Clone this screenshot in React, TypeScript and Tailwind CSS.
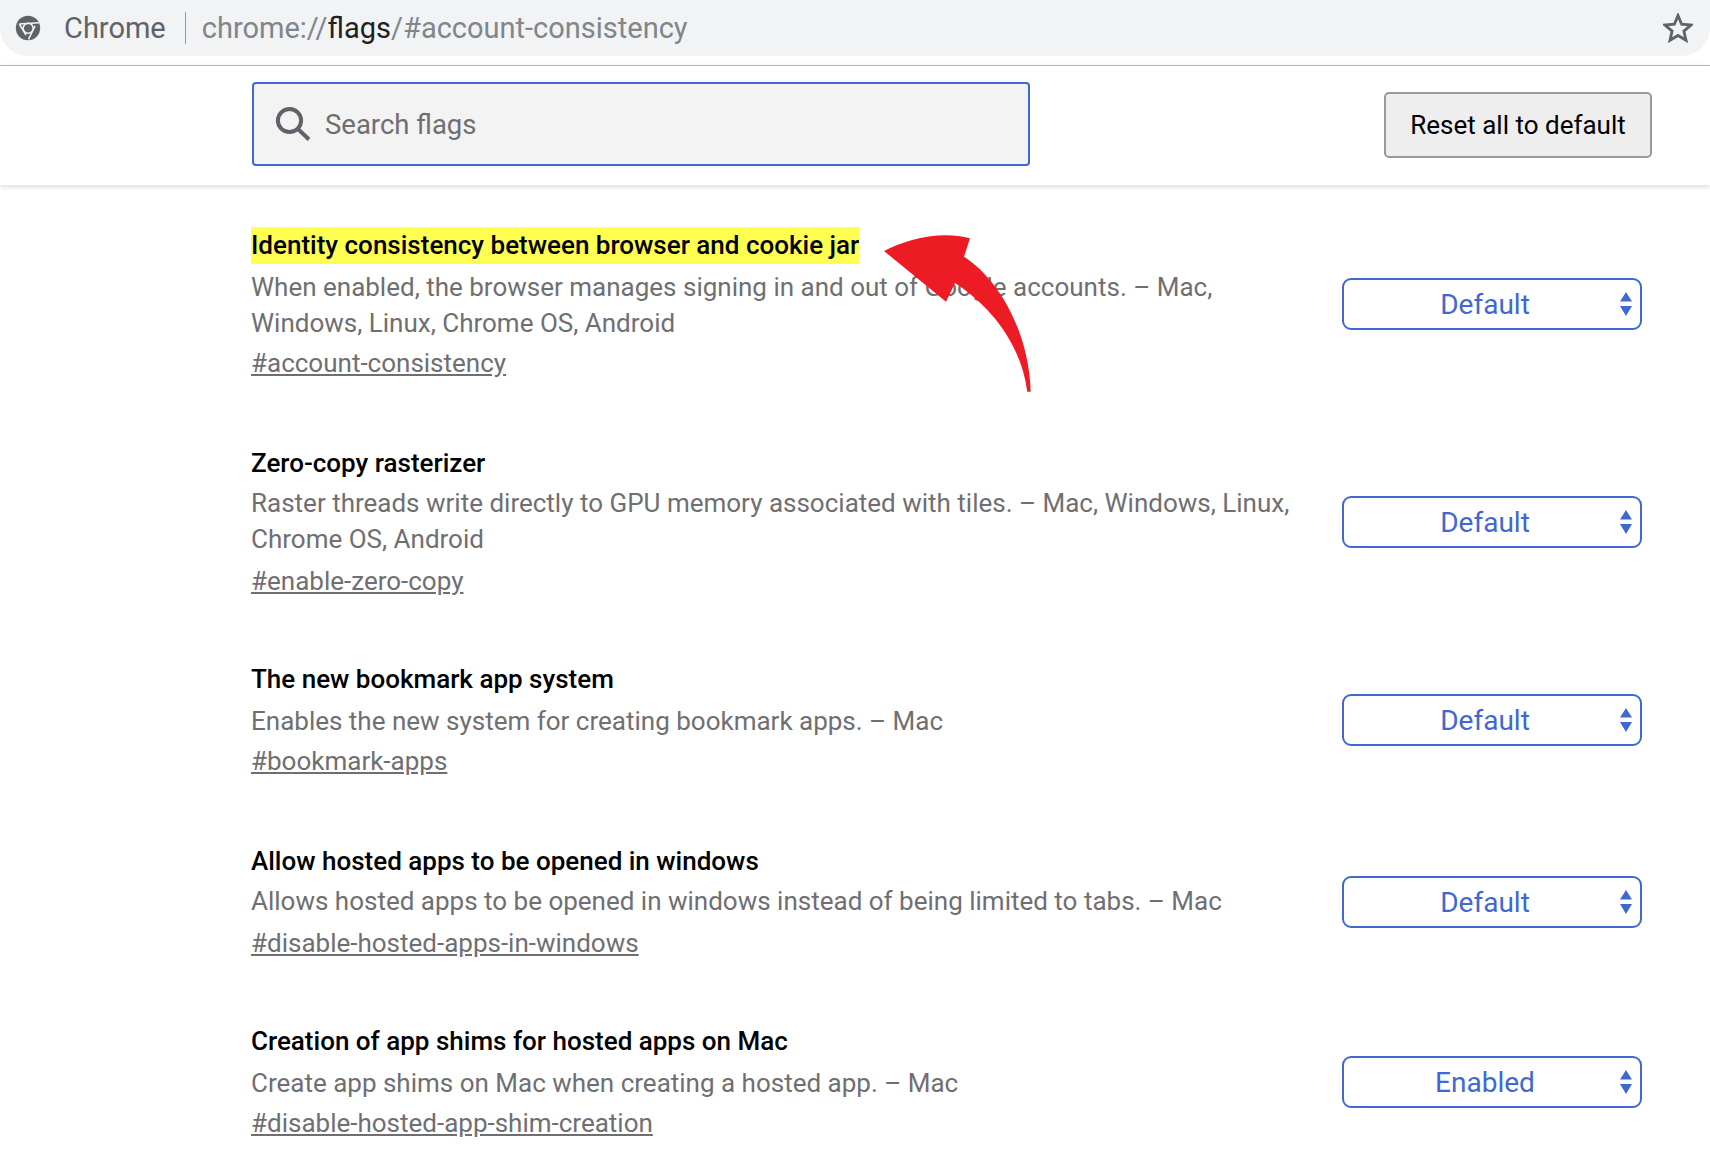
const rows = [
  { title: "Identity consistency between browser and cookie jar", highlight: true, desc: ["When enabled, the browser manages signing in and out of Google accounts. – Mac,", "Windows, Linux, Chrome OS, Android"], link: "#account-consistency", value: "Default", top: "mt-[42px]", dm: "mt-[6px]", lm: "mt-[4px]", sm: "mt-[51px]" },
  { title: "Zero-copy rasterizer", desc: ["Raster threads write directly to GPU memory associated with tiles. – Mac, Windows, Linux,", "Chrome OS, Android"], link: "#enable-zero-copy", value: "Default", top: "mt-[64px]", dm: "mt-[4px]", lm: "mt-[6px]", sm: "mt-[51px]" },
  { title: "The new bookmark app system", desc: ["Enables the new system for creating bookmark apps. – Mac"], link: "#bookmark-apps", value: "Default", top: "mt-[62px]", dm: "mt-[6px]", lm: "mt-[4px]", sm: "mt-[33px]" },
  { title: "Allow hosted apps to be opened in windows", desc: ["Allows hosted apps to be opened in windows instead of being limited to tabs. – Mac"], link: "#disable-hosted-apps-in-windows", value: "Default", top: "mt-[64px]", dm: "mt-[4px]", lm: "mt-[6px]", sm: "mt-[33px]" },
  { title: "Creation of app shims for hosted apps on Mac", desc: ["Create app shims on Mac when creating a hosted app. – Mac"], link: "#disable-hosted-app-shim-creation", value: "Enabled", top: "mt-[62px]", dm: "mt-[6px]", lm: "mt-[4px]", sm: "mt-[33px]" },
];

function ChromeLogo() {
  return (
    <svg width="26" height="26" viewBox="0 0 26 26" className="shrink-0">
      <circle cx="13" cy="13" r="12.2" fill="#5f6368" />
      <circle cx="13.2" cy="13.2" r="5" fill="#5f6368" stroke="#f1f3f4" strokeWidth="1.5" />
      <path d="M4.3 9 L24 7.7 M4.3 9 L11 20 M20 11 L13.5 24.3" stroke="#f1f3f4" strokeWidth="1.5" fill="none" />
    </svg>
  );
}

function Select({ value, className }: { value: string; className: string }) {
  return (
    <div className={`relative flex h-[52px] w-[300px] shrink-0 items-center justify-center rounded-[9px] border-2 border-[#3f68d0] bg-white pr-[14px] pt-[2px] text-[28px] text-[#3f68d0] ${className}`}>
      {value}
      <svg width="14" height="24" viewBox="0 0 14 24" className="absolute right-[7px] top-[12px]" fill="#3f68d0">
        <path d="M7 0 L13 9.5 H1 Z" />
        <path d="M1 14 H13 L7 24 Z" />
      </svg>
    </div>
  );
}

export default function App() {
  return (
    <div className="relative h-[1158px] w-[1710px] overflow-hidden bg-white font-['Roboto',sans-serif]">
      <div className="flex h-[56px] items-center rounded-b-[28px] bg-[#f1f3f4] pl-[15px] pr-[17px]">
        <ChromeLogo />
        <span className="ml-[23px] mt-[2px] text-[29px] text-[#5f6368]">Chrome</span>
        <div className="ml-[19px] h-[32px] w-px bg-[#9a9a9a]" />
        <div className="ml-[16px] mt-[2px] flex-1 text-[29px] text-[#80868b]">
          chrome://<span className="text-[#202124]">flags</span>/#account-consistency
        </div>
        <svg width="30" height="30" viewBox="0 0 30 30" fill="none" stroke="#5f6368" strokeWidth="2.8">
          <path d="M15 2.5 L18.6 11.2 L28 12 L20.9 18.1 L23 27.3 L15 22.5 L7 27.3 L9.1 18.1 L2 12 L11.4 11.2 Z" />
        </svg>
      </div>
      <div className="mt-[9px] h-[120px] border-t border-[#b5b5b5] shadow-[0_2px_5px_rgba(0,0,0,0.14)]">
        <div className="flex items-start pl-[252px]">
          <div className="mt-[16px] flex h-[84px] w-[778px] items-center rounded-[4px] border-2 border-[#3f68d0] bg-[#f3f3f3] pl-[21px]">
            <svg width="36" height="36" viewBox="0 0 36 36" fill="none" stroke="#5f6368" strokeWidth="4" className="shrink-0">
              <circle cx="14.5" cy="14.5" r="11.6" />
              <path d="M23 23 L34 33.5" />
            </svg>
            <span className="ml-[14px] mt-[2px] text-[27.5px] text-[#6f6f6f]">Search flags</span>
          </div>
          <div className="ml-[354px] mt-[26px] flex h-[66px] w-[268px] items-center justify-center rounded-[5px] border-2 border-[#9a9a9a] bg-[#eeeeee] text-[26px] text-black">
            Reset all to default
          </div>
        </div>
      </div>
      <div className="pl-[251px] pr-[68px]">
        {rows.map((r) => (
          <div key={r.title} className={`flex items-start justify-between ${r.top}`}>
            <div className="w-[1060px]">
              <div className="h-[36px] text-[26px] font-medium leading-[36px] text-black">
                <span className={r.highlight ? "inline-block h-[37px] bg-[#ffff52]" : "inline-block"}>{r.title}</span>
              </div>
              <div className={`text-[26px] leading-[36px] text-[#6f6f72] ${r.dm}`}>
                {r.desc.map((d) => (
                  <div key={d} className="whitespace-nowrap">{d}</div>
                ))}
              </div>
              <div className={`text-[26px] leading-[36px] text-[#6f6f72] underline ${r.lm}`}>{r.link}</div>
            </div>
            <Select value={r.value} className={r.sm} />
          </div>
        ))}
      </div>
      <svg width="160" height="170" viewBox="0 0 160 170" className="absolute left-[875px] top-[228px]">
        <path d="M9 23 C30 12 65 2 95 10.3 L89 28.7 C125 52 154 105 155.7 163.7 L152.3 163.7 C146 115 115 78 80 55 L71 73.7 Z" fill="#ed1c24" />
      </svg>
    </div>
  );
}
